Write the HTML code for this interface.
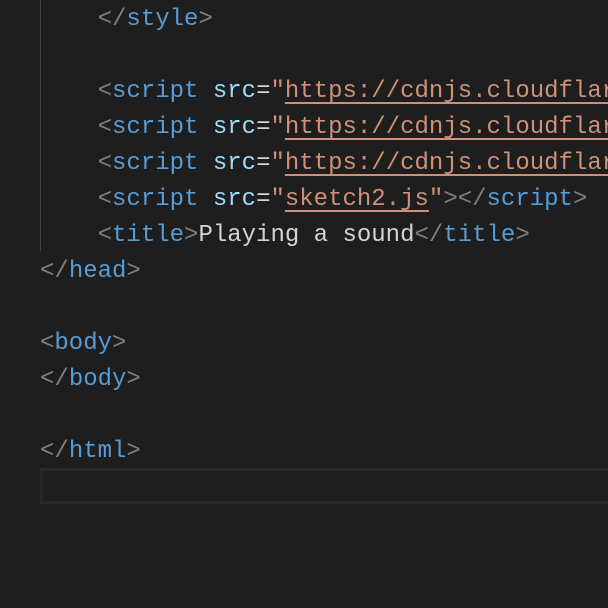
<!DOCTYPE html>
<html><head><style>
html,body{margin:0;width:608px;height:608px;overflow:hidden}
body{background:#1e1e1e;position:relative;font-family:"Liberation Mono",monospace;font-size:24px;}
.l{position:absolute;left:40px;width:568px;overflow:hidden;height:36px;line-height:40px;white-space:pre;color:#d4d4d4;}
.p{color:#808080}.t{color:#569cd6}.a{color:#9cdcfe}.q{color:#ce9178}.s{color:#ce9178;text-decoration:underline;text-underline-offset:5px}
.g{position:absolute;left:40px;top:0;width:1px;height:251px;background:#404040}
.c{position:absolute;left:40px;top:468px;width:565px;height:30px;border:3px solid #282828;border-right:none}
</style></head><body>
<div class="g"></div>
<div class="c"></div>
<div class="l" style="top:0">    <span class="p">&lt;/</span><span class="t">style</span><span class="p">&gt;</span></div>
<div class="l" style="top:72px">    <span class="p">&lt;</span><span class="t">script</span> <span class="a">src</span>=<span class="q">"</span><span class="s">https://cdnjs.cloudflar</span></div>
<div class="l" style="top:108px">    <span class="p">&lt;</span><span class="t">script</span> <span class="a">src</span>=<span class="q">"</span><span class="s">https://cdnjs.cloudflar</span></div>
<div class="l" style="top:144px">    <span class="p">&lt;</span><span class="t">script</span> <span class="a">src</span>=<span class="q">"</span><span class="s">https://cdnjs.cloudflar</span></div>
<div class="l" style="top:180px">    <span class="p">&lt;</span><span class="t">script</span> <span class="a">src</span>=<span class="q">"</span><span class="s">sketch2.js</span><span class="q">"</span><span class="p">&gt;&lt;/</span><span class="t">script</span><span class="p">&gt;</span></div>
<div class="l" style="top:216px">    <span class="p">&lt;</span><span class="t">title</span><span class="p">&gt;</span>Playing a sound<span class="p">&lt;/</span><span class="t">title</span><span class="p">&gt;</span></div>
<div class="l" style="top:252px"><span class="p">&lt;/</span><span class="t">head</span><span class="p">&gt;</span></div>
<div class="l" style="top:324px"><span class="p">&lt;</span><span class="t">body</span><span class="p">&gt;</span></div>
<div class="l" style="top:360px"><span class="p">&lt;/</span><span class="t">body</span><span class="p">&gt;</span></div>
<div class="l" style="top:432px"><span class="p">&lt;/</span><span class="t">html</span><span class="p">&gt;</span></div>
</body></html>
